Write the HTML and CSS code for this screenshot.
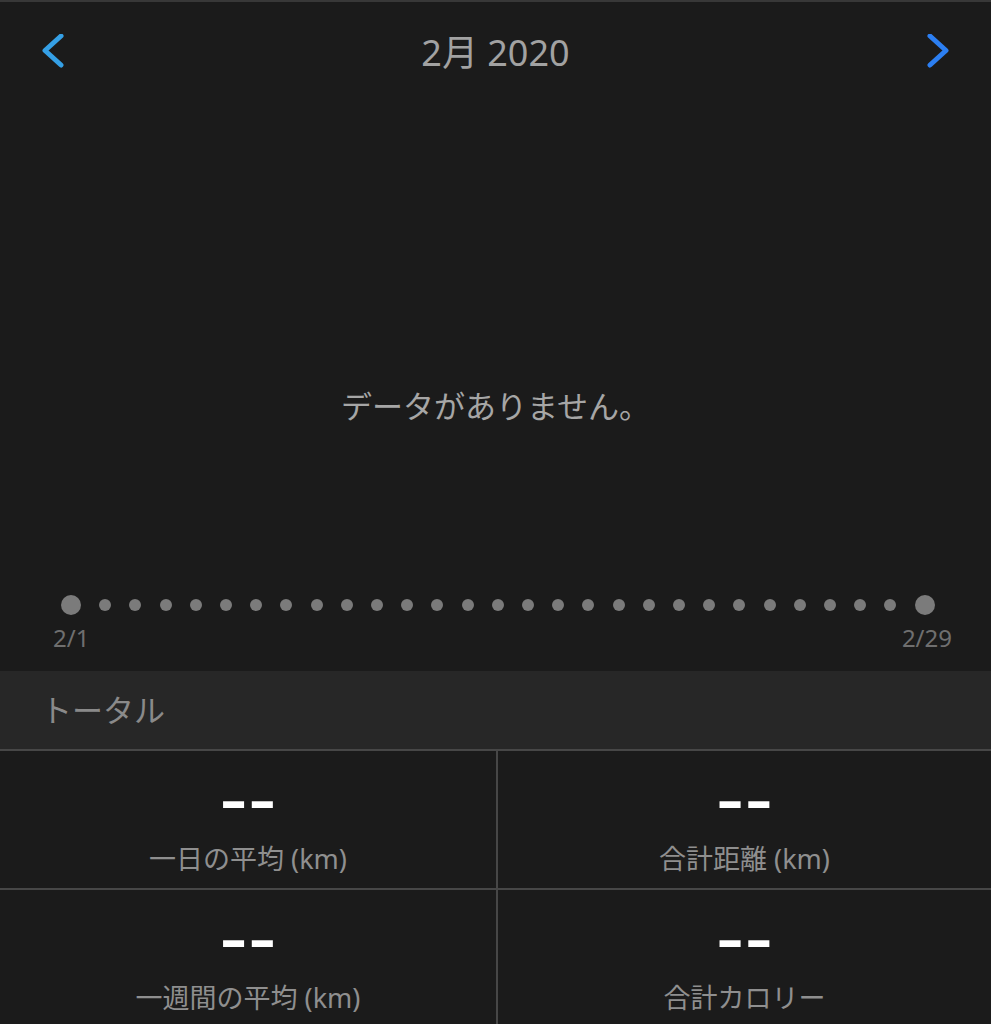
FILE: index.html
```html
<!DOCTYPE html>
<html lang="ja">
<head>
    <meta charset="UTF-8">
    <meta name="viewport" content="width=device-width, initial-scale=1.0">
    <title>月間レポート</title>
    <link rel="stylesheet" href="styles.css">
</head>
<body>
    <header class="month-nav">
        <button class="nav-btn prev" aria-label="前の月">
            <svg width="24" height="38" viewBox="0 0 24 38">
                <polyline points="20,2 4,16.5 20,31" />
            </svg>
        </button>
        <h1 class="month-title">2月 2020</h1>
        <button class="nav-btn next" aria-label="次の月">
            <svg width="24" height="38" viewBox="0 0 24 38">
                <polyline points="4,2 20,16.5 4,31" />
            </svg>
        </button>
    </header>

    <section class="chart">
        <p class="empty-msg">データがありません。</p>
        <div class="timeline">
            <span class="dot big"></span>
            <span class="dot"></span><span class="dot"></span><span class="dot"></span>
            <span class="dot"></span><span class="dot"></span><span class="dot"></span>
            <span class="dot"></span><span class="dot"></span><span class="dot"></span>
            <span class="dot"></span><span class="dot"></span><span class="dot"></span>
            <span class="dot"></span><span class="dot"></span><span class="dot"></span>
            <span class="dot"></span><span class="dot"></span><span class="dot"></span>
            <span class="dot"></span><span class="dot"></span><span class="dot"></span>
            <span class="dot"></span><span class="dot"></span><span class="dot"></span>
            <span class="dot"></span><span class="dot"></span><span class="dot"></span>
            <span class="dot big"></span>
        </div>
        <div class="timeline-labels">
            <span>2/1</span>
            <span>2/29</span>
        </div>
    </section>

    <div class="section-head">トータル</div>

    <div class="stats">
        <div class="stat-cell">
            <div class="stat-value">--</div>
            <div class="stat-label">一日の平均 (km)</div>
        </div>
        <div class="stat-cell">
            <div class="stat-value">--</div>
            <div class="stat-label">合計距離 (km)</div>
        </div>
        <div class="stat-cell">
            <div class="stat-value">--</div>
            <div class="stat-label">一週間の平均 (km)</div>
        </div>
        <div class="stat-cell">
            <div class="stat-value">--</div>
            <div class="stat-label">合計カロリー</div>
        </div>
    </div>
</body>
</html>
```

FILE: styles.css
```css
body {
    margin: 0;
    padding: 0;
    background: #1b1b1b;
    color: #9c9c9c;
    font-family: "Noto Sans", "Noto Sans CJK JP", sans-serif;
    overflow: hidden;
}

.month-nav {
    height: 102px;
    border-top: 2px solid #383838;
    display: flex;
    align-items: center;
    justify-content: space-between;
    padding: 0 41px;
}

.nav-btn {
    background: none;
    border: none;
    padding: 0;
    width: 24px;
    height: 38px;
    cursor: pointer;
}

.nav-btn svg {
    display: block;
}

.nav-btn polyline {
    fill: none;
    stroke-width: 5;
    stroke-linecap: round;
    stroke-linejoin: round;
}

.nav-btn.prev polyline {
    stroke: #35a0e6;
}

.nav-btn.next polyline {
    stroke: #2c7ff2;
}

.month-title {
    margin: 0;
    font-size: 36px;
    font-weight: 400;
    line-height: 48px;
    color: #a2a2a2;
}

.chart {
    padding: 282px 0 18px;
}

.empty-msg {
    margin: 0;
    text-align: center;
    font-size: 31px;
    line-height: 40px;
    color: #a6a6a6;
}

.timeline {
    margin-top: 169px;
    height: 20px;
    padding: 0 56px 0 61px;
    display: flex;
    align-items: center;
    justify-content: space-between;
}

.dot {
    width: 12px;
    height: 12px;
    border-radius: 50%;
    background: #7b7b7b;
}

.dot.big {
    width: 20px;
    height: 20px;
}

.timeline-labels {
    margin-top: 8px;
    padding: 0 39px 0 53px;
    display: flex;
    justify-content: space-between;
    font-size: 24px;
    line-height: 30px;
    color: #6f6f6f;
}

.section-head {
    height: 78px;
    line-height: 78px;
    padding-left: 41px;
    background: #272727;
    font-size: 31px;
    color: #8a8a8a;
}

.stats {
    display: grid;
    grid-template-columns: 498px 1fr;
    border-top: 2px solid #474747;
}

.stat-cell {
    padding: 26px 0 13px;
    border-bottom: 2px solid #474747;
    text-align: center;
}

.stat-cell:nth-child(odd) {
    border-right: 2px solid #474747;
}

.stat-value {
    height: 40px;
    line-height: 40px;
    font-family: "Liberation Sans", sans-serif;
    font-size: 86px;
    color: #ffffff;
}

.stat-label {
    margin-top: 26px;
    font-size: 27px;
    line-height: 32px;
    color: #8f8f8f;
}
```
